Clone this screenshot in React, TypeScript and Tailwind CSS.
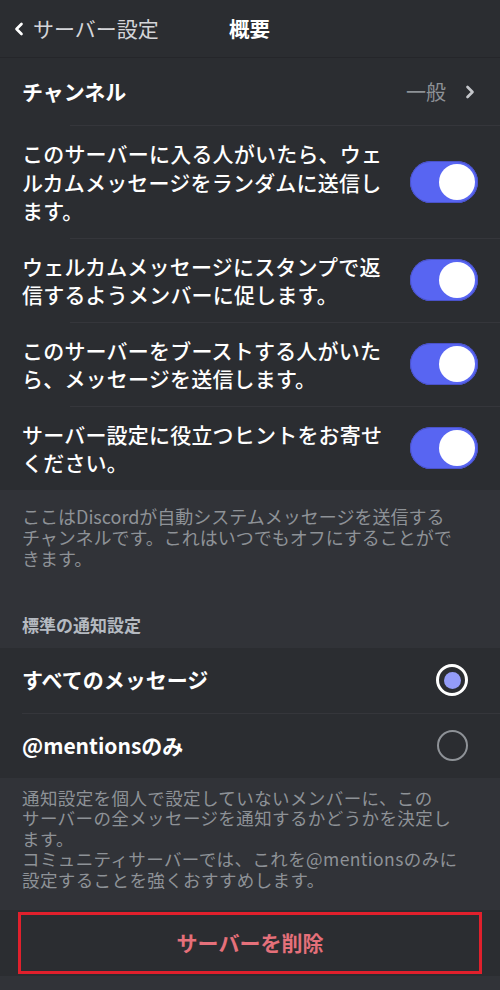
import { ChevronLeft, ChevronRight } from 'lucide-react';

const toggles: string[][] = [
  ['このサーバーに入る人がいたら、ウェ', 'ルカムメッセージをランダムに送信し', 'ます。'],
  ['ウェルカムメッセージにスタンプで返', '信するようメンバーに促します。'],
  ['このサーバーをブーストする人がいた', 'ら、メッセージを送信します。'],
  ['サーバー設定に役立つヒントをお寄せ', 'ください。'],
];

function Toggle() {
  return (
    <div className="flex h-[42px] w-[68px] shrink-0 items-center justify-end rounded-full bg-[#5865f2] pr-[3px] shadow-[inset_0_0_0_1px_#4a52c9]">
      <div className="h-[36px] w-[36px] rounded-full bg-white" />
    </div>
  );
}

function Lines({ lines }: { lines: string[] }) {
  return (
    <>
      {lines.map((l, i) => (
        <span key={i} className="block whitespace-nowrap">
          {l}
        </span>
      ))}
    </>
  );
}

export default function App() {
  return (
    <div className="flex h-[990px] w-[500px] flex-col overflow-hidden bg-[#313338] font-['Noto_Sans_CJK_JP','Noto_Sans',sans-serif] text-white">
      {/* header */}
      <div className="relative flex h-[58px] shrink-0 items-center border-b border-[#25262a] bg-[#2b2d31]">
        <div className="flex items-center pl-[9px] text-[#d4d5d9]">
          <ChevronLeft className="h-[20px] w-[20px] text-white" strokeWidth={3.2} />
          <span className="ml-[4px] text-[21px] leading-none">サーバー設定</span>
        </div>
        <span className="absolute left-[229px] text-[20.5px] font-bold leading-none">概要</span>
      </div>

      {/* channel row */}
      <div className="flex h-[67px] shrink-0 items-center bg-[#2b2d31] pl-[22px] pr-[20px]">
        <span className="text-[21px] font-bold">チャンネル</span>
        <span className="ml-auto text-[20px] text-[#8e9297]">一般</span>
        <ChevronRight className="ml-[14px] h-[20px] w-[20px] text-[#c4c6ca]" strokeWidth={3.2} />
      </div>

      {/* toggles */}
      <div className="flex flex-col bg-[#2b2d31]">
        {toggles.map((lines, i) => (
          <div key={i} className="ml-[70px] flex items-center border-t border-[#35363b]">
            <div className="-ml-[48px] flex flex-1 items-center py-[13px] pr-[22px]">
              <div className="flex-1 text-[21px] font-medium leading-[28.5px] tracking-[0.2px]">
                <Lines lines={lines} />
              </div>
              <Toggle />
            </div>
          </div>
        ))}
      </div>

      {/* description */}
      <div className="px-[22px] pt-[16px] text-[18px] leading-[21px] text-[#8e9297]">
        <Lines
          lines={[
            'ここはDiscordが自動システムメッセージを送信する',
            'チャンネルです。これはいつでもオフにすることがで',
            'きます。',
          ]}
        />
      </div>
      <div className="px-[22px] pt-[44px] pb-[11px] text-[17px] font-bold leading-[24px] text-[#b5bac1]">
        標準の通知設定
      </div>

      {/* radios */}
      <div className="flex flex-col bg-[#2b2d31]">
        <div className="flex h-[65px] items-center pl-[22px] pr-[32px]">
          <span className="flex-1 text-[21px] font-bold">すべてのメッセージ</span>
          <div className="flex h-[32px] w-[32px] items-center justify-center rounded-full border-[3px] border-white">
            <div className="h-[17px] w-[17px] rounded-full bg-[#949cf7]" />
          </div>
        </div>
        <div className="ml-[22px] flex h-[65px] items-center border-t border-[#35363b] pr-[32px]">
          <span className="flex-1 text-[21px] font-bold">@mentionsのみ</span>
          <div className="h-[31px] w-[31px] rounded-full border-2 border-[#8e9297]" />
        </div>
      </div>

      {/* description 2 */}
      <div className="px-[22px] pt-[10px] text-[17.5px] leading-[20.5px] tracking-[0.4px] text-[#8e9297]">
        <Lines
          lines={[
            '通知設定を個人で設定していないメンバーに、この',
            'サーバーの全メッセージを通知するかどうかを決定し',
            'ます。',
            'コミュニティサーバーでは、これを@mentionsのみに',
            '設定することを強くおすすめします。',
          ]}
        />
      </div>

      {/* delete */}
      <div className="mt-[20px] flex h-[66px] shrink-0 items-center bg-[#2b2d31] px-[18px]">
        <div className="flex h-[62px] w-full items-center justify-center border-[3px] border-[#e0202c]">
          <span className="text-[21px] font-bold text-[#e5707a]">サーバーを削除</span>
        </div>
      </div>
    </div>
  );
}
